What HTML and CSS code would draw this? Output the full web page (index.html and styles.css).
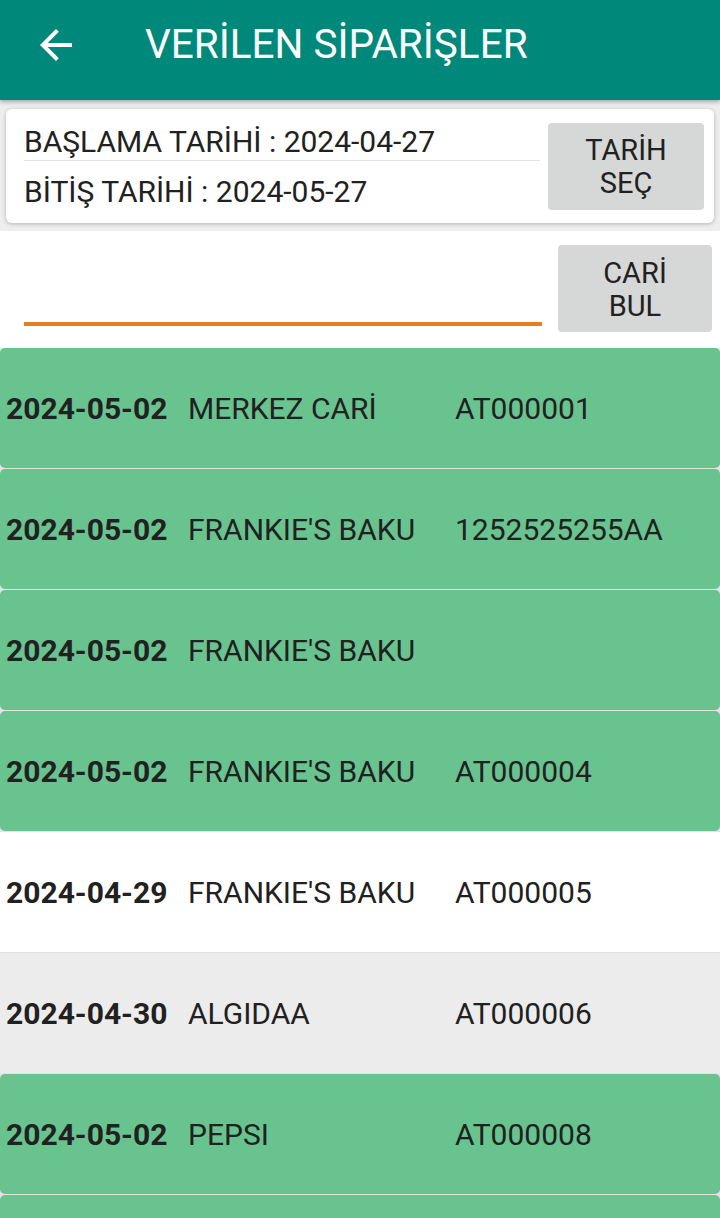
FILE: index.html
```html
<!DOCTYPE html>
<html lang="tr">
<head>
<meta charset="utf-8">
<title>Verilen Siparişler</title>
<link rel="stylesheet" href="styles.css">
</head>
<body>
<header class="appbar">
  <svg class="back" viewBox="0 0 24 24" width="48" height="48"><path d="M20 11H7.83l5.59-5.59L12 4l-8 8 8 8 1.41-1.41L7.83 13H20v-2z" fill="#ffffff"/></svg>
  <h1 class="title">VERİLEN SİPARİŞLER</h1>
</header>
<section class="filter">
  <div class="card">
    <div class="dates">
      <div class="date-line first">BAŞLAMA TARİHİ : 2024-04-27</div>
      <div class="date-line">BİTİŞ TARİHİ : 2024-05-27</div>
    </div>
    <button class="btn btn-date">TARİH<br>SEÇ</button>
  </div>
</section>
<section class="search">
  <div class="input"></div>
  <button class="btn btn-cari">CARİ<br>BUL</button>
</section>
<ul class="list">
  <li class="row green"><span class="c-date">2024-05-02</span><span class="c-name">MERKEZ CARİ</span><span class="c-code">AT000001</span></li>
  <li class="row green"><span class="c-date">2024-05-02</span><span class="c-name">FRANKIE'S BAKU</span><span class="c-code">1252525255AA</span></li>
  <li class="row green"><span class="c-date">2024-05-02</span><span class="c-name">FRANKIE'S BAKU</span><span class="c-code"></span></li>
  <li class="row green"><span class="c-date">2024-05-02</span><span class="c-name">FRANKIE'S BAKU</span><span class="c-code">AT000004</span></li>
  <li class="row white"><span class="c-date">2024-04-29</span><span class="c-name">FRANKIE'S BAKU</span><span class="c-code">AT000005</span></li>
  <li class="row grey"><span class="c-date">2024-04-30</span><span class="c-name">ALGIDAA</span><span class="c-code">AT000006</span></li>
  <li class="row green"><span class="c-date">2024-05-02</span><span class="c-name">PEPSI</span><span class="c-code">AT000008</span></li>
  <li class="row green"></li>
</ul>
</body>
</html>
```
FILE: styles.css
```css
* { box-sizing: border-box; }
html, body { margin: 0; padding: 0; }
body {
  width: 720px;
  height: 1218px;
  overflow: hidden;
  background: #ffffff;
  font-family: Roboto, "Noto Sans", sans-serif;
  color: #212121;
}
.appbar {
  height: 100px;
  background: #00897b;
  display: flex;
  align-items: flex-start;
  padding-top: 21px;
  position: relative;
  z-index: 2;
  box-shadow: 0 2px 4px rgba(0,0,0,0.3);
}
.back { margin-left: 32px; flex: none; }
.title {
  margin: 3px 0 0 65px;
  font-size: 40.5px;
  font-weight: 400;
  color: #ffffff;
  line-height: 1;
  white-space: nowrap;
}
.filter {
  background: #eeeeee;
  padding: 9px 6px 8px;
}
.card {
  background: #ffffff;
  border-radius: 6px;
  box-shadow: 0 1px 4px rgba(0,0,0,0.25);
  display: flex;
  align-items: flex-start;
  padding: 14px 10px 13px 18px;
  gap: 8px;
}
.dates { flex: 1; padding-top: 1px; }
.date-line {
  font-size: 30px;
  line-height: 36px;
  white-space: nowrap;
}
.date-line.first {
  border-bottom: 1px solid #e2e2e2;
  margin-bottom: 13px;
}
.btn {
  border: 0;
  border-radius: 4px;
  background: #d6d7d7;
  font-family: Roboto, "Noto Sans", sans-serif;
  font-size: 29px;
  line-height: 33px;
  color: #212121;
  padding: 0;
}
.btn-date { width: 156px; height: 87px; flex: none; }
.search {
  display: flex;
  align-items: flex-start;
  padding: 14px 8px 0 24px;
  gap: 16px;
}
.input {
  flex: 1;
  height: 81px;
  border-bottom: 4px solid #e67e22;
}
.btn-cari { width: 154px; height: 87px; flex: none; padding-top: 2px; }
.list {
  list-style: none;
  margin: 16px 0 0;
  padding: 0;
  display: flex;
  flex-direction: column;
  gap: 1px;
  background: #e2e2e2;
}
.row {
  height: 120px;
  flex: none;
  display: flex;
  align-items: center;
  font-size: 30px;
  white-space: nowrap;
}
.row.green { background: #69c38f; border-radius: 5px; }
.row.white { background: #ffffff; }
.row.grey { background: #ececec; }
.c-date { width: 182px; margin-left: 6px; font-weight: 700; }
.c-name { width: 267px; }
.c-code { flex: 1; }
```
